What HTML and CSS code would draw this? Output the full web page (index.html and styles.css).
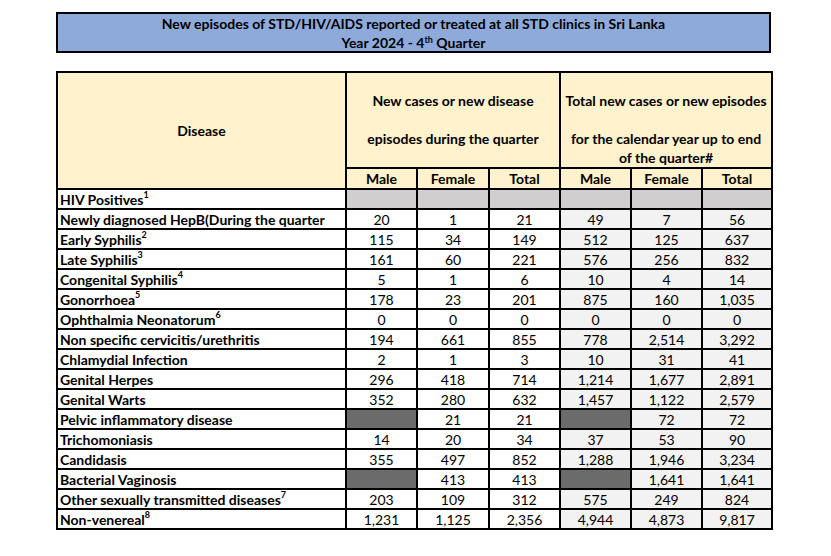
FILE: index.html
```html
<!DOCTYPE html>
<html lang="en">
<head>
<meta charset="utf-8">
<title>STD clinics Sri Lanka 2024 Q4</title>
<link rel="stylesheet" href="styles.css">
</head>
<body>
<div class="page">
  <div class="title">
    <div>New episodes of STD/HIV/AIDS reported or treated at all STD clinics in Sri Lanka</div>
    <div>Year 2024 - 4<sup class="th">th</sup> Quarter</div>
  </div>
  <table class="data">
    <colgroup>
      <col class="c-dis"><col class="c-n"><col class="c-n2"><col class="c-n"><col class="c-n"><col class="c-n"><col class="c-n3">
    </colgroup>
    <thead>
      <tr class="h1">
        <th rowspan="2" class="hd-dis">Disease</th>
        <th colspan="3" class="grp">New cases or new disease<br>&nbsp;<br>episodes during the quarter<br>&nbsp;</th>
        <th colspan="3" class="grp">Total new cases or new episodes<br>&nbsp;<br>for the calendar year up to end<br>of the quarter#</th>
      </tr>
      <tr class="h2">
        <th>Male</th><th>Female</th><th>Total</th>
        <th>Male</th><th>Female</th><th>Total</th>
      </tr>
    </thead>
    <tbody>
      <tr><td class="dis">HIV Positives<sup>1</sup></td><td class="lg"></td><td class="lg"></td><td class="lg"></td><td class="lg"></td><td class="lg"></td><td class="lg"></td></tr>
      <tr><td class="dis">Newly diagnosed HepB(During the quarter</td><td>20</td><td>1</td><td>21</td><td class="r">49</td><td class="r">7</td><td class="r">56</td></tr>
      <tr><td class="dis">Early Syphilis<sup>2</sup></td><td>115</td><td>34</td><td>149</td><td class="r">512</td><td class="r">125</td><td class="r">637</td></tr>
      <tr><td class="dis">Late Syphilis<sup>3</sup></td><td>161</td><td>60</td><td>221</td><td class="r">576</td><td class="r">256</td><td class="r">832</td></tr>
      <tr><td class="dis">Congenital Syphilis<sup>4</sup></td><td>5</td><td>1</td><td>6</td><td class="r">10</td><td class="r">4</td><td class="r">14</td></tr>
      <tr><td class="dis">Gonorrhoea<sup>5</sup></td><td>178</td><td>23</td><td>201</td><td class="r">875</td><td class="r">160</td><td class="r">1,035</td></tr>
      <tr><td class="dis">Ophthalmia Neonatorum<sup>6</sup></td><td>0</td><td>0</td><td>0</td><td class="r">0</td><td class="r">0</td><td class="r">0</td></tr>
      <tr><td class="dis">Non specific cervicitis/urethritis</td><td>194</td><td>661</td><td>855</td><td class="r">778</td><td class="r">2,514</td><td class="r">3,292</td></tr>
      <tr><td class="dis">Chlamydial Infection</td><td>2</td><td>1</td><td>3</td><td class="r">10</td><td class="r">31</td><td class="r">41</td></tr>
      <tr><td class="dis">Genital Herpes</td><td>296</td><td>418</td><td>714</td><td class="r">1,214</td><td class="r">1,677</td><td class="r">2,891</td></tr>
      <tr><td class="dis">Genital Warts</td><td>352</td><td>280</td><td>632</td><td class="r">1,457</td><td class="r">1,122</td><td class="r">2,579</td></tr>
      <tr><td class="dis">Pelvic inflammatory disease</td><td class="dg"></td><td>21</td><td>21</td><td class="dg"></td><td class="r">72</td><td class="r">72</td></tr>
      <tr><td class="dis">Trichomoniasis</td><td>14</td><td>20</td><td>34</td><td class="r">37</td><td class="r">53</td><td class="r">90</td></tr>
      <tr><td class="dis">Candidasis</td><td>355</td><td>497</td><td>852</td><td class="r">1,288</td><td class="r">1,946</td><td class="r">3,234</td></tr>
      <tr><td class="dis">Bacterial Vaginosis</td><td class="dg"></td><td>413</td><td>413</td><td class="dg"></td><td class="r">1,641</td><td class="r">1,641</td></tr>
      <tr><td class="dis">Other sexually transmitted diseases<sup>7</sup></td><td>203</td><td>109</td><td>312</td><td class="r">575</td><td class="r">249</td><td class="r">824</td></tr>
      <tr><td class="dis">Non-venereal<sup>8</sup></td><td>1,231</td><td>1,125</td><td>2,356</td><td class="r">4,944</td><td class="r">4,873</td><td class="r">9,817</td></tr>
    </tbody>
  </table>
</div>
</body>
</html>
```
FILE: styles.css
```css
html, body {
  margin: 0;
  padding: 0;
  background: #ffffff;
}
body {
  font-family: Lato, "Liberation Sans", sans-serif;
  color: #000;
  font-size: 14px;
}
.page {
  padding: 12px 0 0 56px;
}
.title {
  box-sizing: border-box;
  width: 715px;
  height: 41px;
  border: 2px solid #000;
  background: #8eaadb;
  font-weight: 700;
  text-align: center;
  line-height: 19px;
}
.title .th {
  font-size: 9px;
  line-height: 0;
  vertical-align: 5px;
}
.data {
  margin-top: 18px;
  border-collapse: collapse;
  table-layout: fixed;
  width: 715px;
}
.c-dis { width: 289px; }
.c-n { width: 71px; }
.c-n2 { width: 72px; }
.c-n3 { width: 70px; }
.data th, .data td {
  border: 2px solid #000;
  padding: 0;
  text-align: center;
  white-space: nowrap;
  overflow: hidden;
}
.data th {
  background: #fff2cc;
  font-weight: 700;
}
.h1 { height: 96px; }
.h1 .grp {
  vertical-align: bottom;
  line-height: 19px;
  padding-bottom: 0;
}
.h2 { height: 21px; }
.data tbody tr { height: 20px; }
.data td {
  line-height: 17px;
}
.data td.dis {
  text-align: left;
  font-weight: 700;
  padding-left: 2px;
}
.data td.r { background: #f2f2f2; }
.data td.lg { background: #d0cece; }
.data td.dg { background: #6b6b6b; }
sup {
  font-size: 9px;
  line-height: 0;
  vertical-align: 7px;
}
```
